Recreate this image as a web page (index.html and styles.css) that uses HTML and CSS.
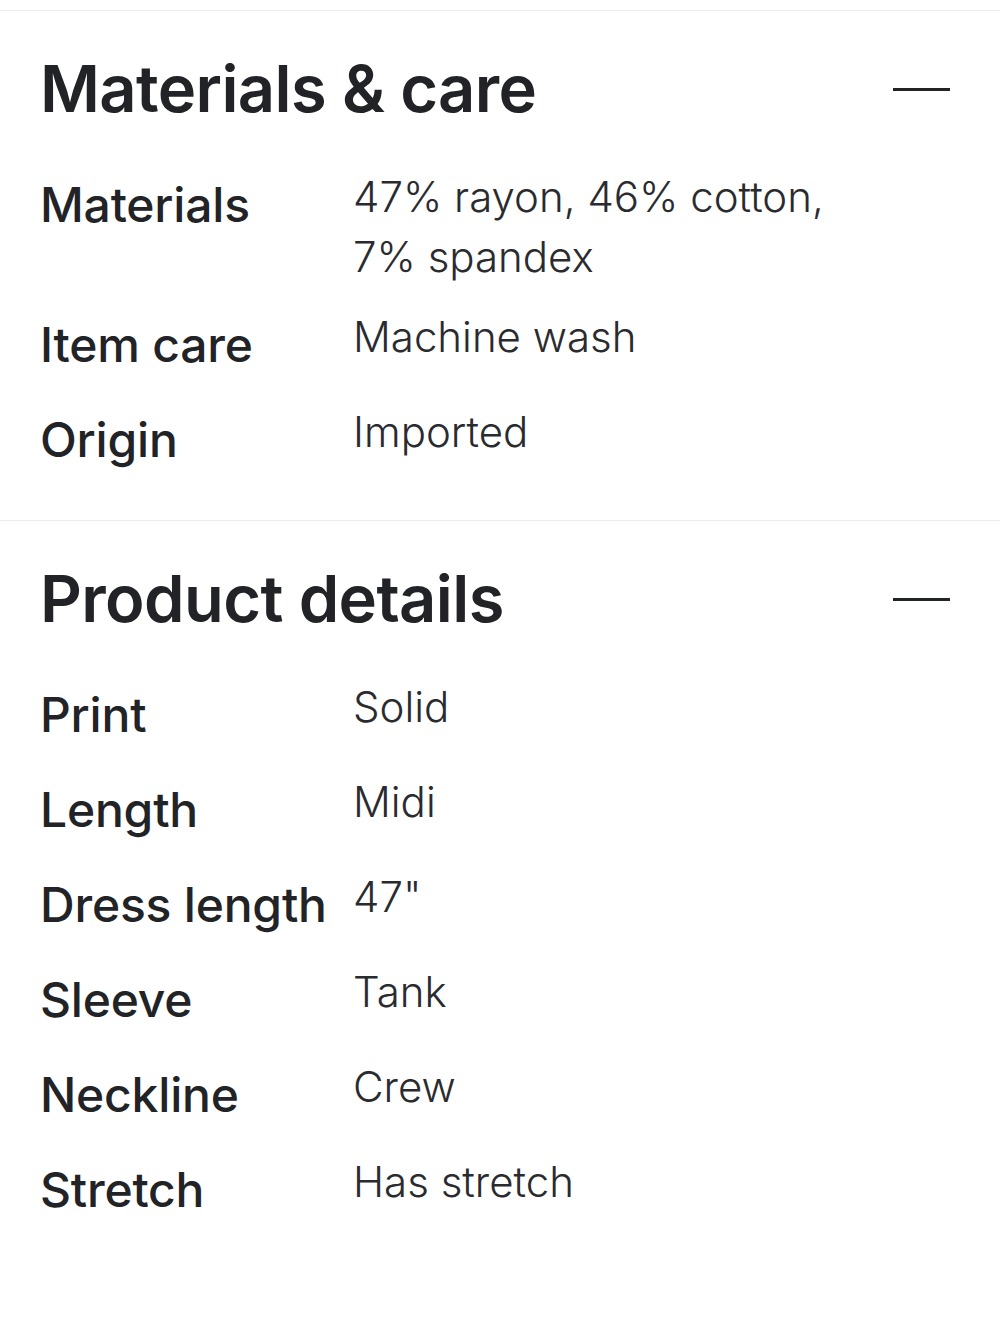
FILE: index.html
```html
<!DOCTYPE html>
<html lang="en">

<head>
  <meta charset="UTF-8">
  <meta name="viewport" content="width=device-width, initial-scale=1.0">
  <title>Product info</title>
  <link rel="stylesheet" href="styles.css">
</head>

<body>
  <div class="top-space"></div>

  <section class="info-section">
    <div class="section-header">
      <h2 class="section-title">Materials &amp; care</h2>
      <span class="collapse-icon"></span>
    </div>
    <div class="spec-list">
      <div class="spec-row">
        <div class="spec-label">Materials</div>
        <div class="spec-value">47% rayon, 46% cotton, 7% spandex</div>
      </div>
      <div class="spec-row">
        <div class="spec-label">Item care</div>
        <div class="spec-value">Machine wash</div>
      </div>
      <div class="spec-row">
        <div class="spec-label">Origin</div>
        <div class="spec-value">Imported</div>
      </div>
    </div>
  </section>

  <section class="info-section">
    <div class="section-header">
      <h2 class="section-title">Product details</h2>
      <span class="collapse-icon"></span>
    </div>
    <div class="spec-list">
      <div class="spec-row">
        <div class="spec-label">Print</div>
        <div class="spec-value">Solid</div>
      </div>
      <div class="spec-row">
        <div class="spec-label">Length</div>
        <div class="spec-value">Midi</div>
      </div>
      <div class="spec-row">
        <div class="spec-label">Dress length</div>
        <div class="spec-value">47"</div>
      </div>
      <div class="spec-row">
        <div class="spec-label">Sleeve</div>
        <div class="spec-value">Tank</div>
      </div>
      <div class="spec-row">
        <div class="spec-label">Neckline</div>
        <div class="spec-value">Crew</div>
      </div>
      <div class="spec-row">
        <div class="spec-label">Stretch</div>
        <div class="spec-value">Has stretch</div>
      </div>
    </div>
  </section>
</body>

</html>
```

FILE: styles.css
```css
body {
  font-family: 'Inter', 'Noto Sans', sans-serif;
  margin: 0;
  background-color: #fff;
  color: #222326;
}

.top-space {
  height: 10px;
}

.info-section {
  border-top: 1px solid #ececec;
  padding: 38px 50px 43px 40px;
}

.section-header {
  display: flex;
  align-items: center;
  justify-content: space-between;
  height: 80px;
}

.section-title {
  margin: 0;
  font-size: 65px;
  font-weight: 600;
  letter-spacing: -0.6px;
  line-height: 80px;
}

.collapse-icon {
  display: block;
  width: 57px;
  height: 3px;
  background-color: #222326;
}

.spec-list {
  margin-top: 38px;
  display: flex;
  flex-direction: column;
  gap: 20px;
}

.spec-row {
  display: flex;
  align-items: flex-start;
}

.spec-label {
  width: 313px;
  flex-shrink: 0;
  font-size: 48px;
  font-weight: 450;
  line-height: 75px;
  letter-spacing: -0.2px;
}

.spec-value {
  max-width: 490px;
  font-size: 42px;
  font-weight: 300;
  line-height: 60px;
  color: #2a2b2f;
}
```
